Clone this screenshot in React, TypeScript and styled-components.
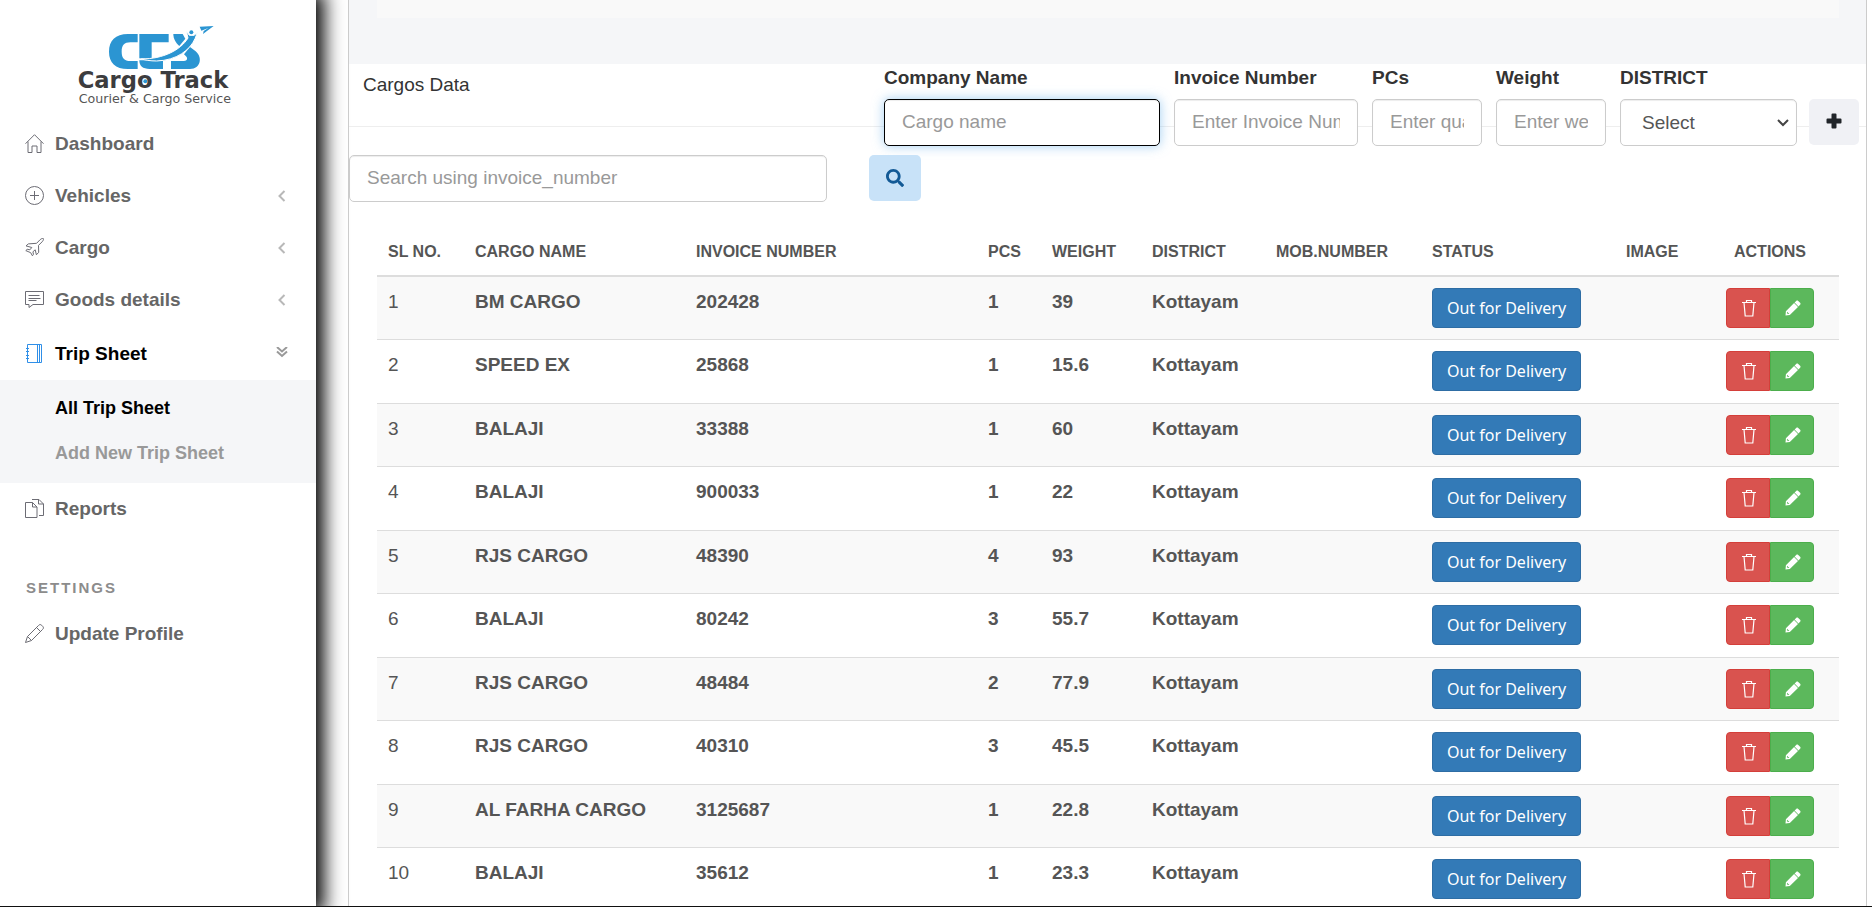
import React from 'react';
import styled, { createGlobalStyle, css } from 'styled-components';
import { FaSearch } from 'react-icons/fa';

const GlobalStyle = createGlobalStyle`
  *, *::before, *::after { box-sizing: border-box; }
  body {
    margin: 0;
    background: #fff;
    color: #333;
    font: 19px/27px "Liberation Sans", Arial, sans-serif;
  }
  button, input, select { font: inherit; }
`;

const Shell = styled.div`
  display: flex;
  height: 100vh;
  overflow: hidden;
  border-bottom: 1px solid #111;
`;

const Sidebar = styled.aside`
  flex: 0 0 316px;
  padding-top: 10px;
  background: #fff;
  box-shadow: 0 0 18px 8px #000;
`;

const LogoLink = styled.a`
  display: block;
  height: 108px;
  padding-left: 60px;
`;

const Menu = styled.ul`
  margin: 0;
  padding: 0;
  list-style: none;
`;

const MenuLink = styled.a<{ $active?: boolean }>`
  display: flex;
  align-items: center;
  gap: 11px;
  height: ${p => (p.$active ? 54 : 52)}px;
  padding: 0 29px ${p => (p.$active ? 0 : 1)}px 25px;
  color: ${p => (p.$active ? '#000' : '#666')};
  font-weight: bold;
  text-decoration: none;

  > span { flex: 1; }
`;

const MenuGlyph = styled.svg<{ $active?: boolean }>`
  flex: none;
  width: 19px;
  height: 19px;
  fill: none;
  stroke: ${p => (p.$active ? '#2f8fe8' : '#6c6c74')};
  stroke-linejoin: round;
`;

const Chevron = styled.svg<{ $open?: boolean }>`
  flex: none;
  width: 12px;
  height: 12px;
  margin-right: -1px;
  fill: none;
  stroke: ${p => (p.$open ? '#999' : '#b8b8b8')};
  stroke-width: 2;
`;

const SubMenu = styled.ul`
  margin: 0;
  padding: 6px 0 7px;
  list-style: none;
  background: #f5f6f8;
`;

const SubLink = styled.a<{ $active?: boolean }>`
  display: block;
  padding-left: 55px;
  color: ${p => (p.$active ? '#000' : '#999')};
  font-size: 18px;
  font-weight: bold;
  line-height: 45px;
  text-decoration: none;
`;

const MenuHeading = styled.h2`
  margin: 38px 0 5px;
  padding-left: 26px;
  color: #8c8c8c;
  font-size: 15px;
  line-height: 30px;
  letter-spacing: 2px;
`;

const Main = styled.main`
  flex: 1;
  min-width: 0;
  margin: 0 5px 0 32px;
  border: solid #ccc;
  border-width: 0 1px;
`;

const TopBand = styled.div`
  height: 64px;
  padding: 0 27px 45px 28px;
  background: #f5f6f8;
`;

const TopBandInner = styled.div`
  height: 18px;
  background: #f9f9f9;
`;

const PanelHeader = styled.header`
  display: flex;
  align-items: flex-start;
  justify-content: space-between;
  height: 63px;
  padding: 0 7px 0 14px;
  border-bottom: 1px solid #eee;
`;

const PanelTitle = styled.h1`
  margin: 7px 0 0;
  font-size: 19px;
  font-weight: normal;
`;

const EntryForm = styled.form`
  display: flex;
  align-items: flex-end;
  gap: 14px;
`;

const Field = styled.div<{ $width: number }>`
  display: flex;
  flex-direction: column;
  gap: 8px;
  width: ${p => p.$width}px;

  label { font-weight: bold; }
`;

const control = css`
  width: 100%;
  height: 47px;
  border: 1px solid #ccc;
  border-radius: 5px;
  background: #fff;
  color: #555;
  box-shadow: inset 0 1px 1px rgba(0, 0, 0, 0.075);
`;

const TextInput = styled.input`
  ${control}
  padding: 0 17px 2px;
  outline: none;

  &::placeholder { color: #999; opacity: 1; }
  &:focus {
    border-color: #000;
    box-shadow: inset 0 1px 1px rgba(0, 0, 0, 0.075), 0 0 12px rgba(102, 175, 233, 0.6);
  }
`;

const SelectBox = styled.div`
  display: grid;
  align-items: center;

  > * { grid-area: 1 / 1; }
  > svg {
    justify-self: end;
    width: 12px;
    height: 8px;
    margin-right: 8px;
    fill: none;
    stroke: #444;
    stroke-width: 2;
    pointer-events: none;
  }
`;

const Select = styled.select`
  ${control}
  appearance: none;
  padding: 0 30px 0 21px;
`;

const IconButton = styled.button<{ $primary?: boolean }>`
  display: flex;
  align-items: center;
  justify-content: center;
  width: ${p => (p.$primary ? 52 : 50)}px;
  height: 46px;
  padding: 0;
  border: 0;
  border-radius: 5px;
  background: ${p => (p.$primary ? '#c8e2f8' : '#f0f1f5')};
  color: ${p => (p.$primary ? '#135a96' : '#212529')};
`;

const AddButton = styled(IconButton)`
  margin: 0 0 1px -2px;
  padding-bottom: 3px;
`;

const SearchForm = styled.form`
  display: flex;
  gap: 42px;
  margin-top: 28px;

  ${TextInput} { width: 478px; }
`;

const TableWrap = styled.div`
  padding: 24px 27px 0 28px;
`;

const Table = styled.table`
  width: 100%;
  border-collapse: separate;
  border-spacing: 0;
  table-layout: fixed;
  color: #555;
  font-weight: bold;
`;

const HeadCell = styled.th<{ $width?: number; $center?: boolean }>`
  width: ${p => (p.$width ? `${p.$width}px` : 'auto')};
  height: 51px;
  padding: 2px 0 0 ${p => (p.$center ? 0 : 11)}px;
  border-bottom: 2px solid #ddd;
  font-size: 16px;
  text-align: ${p => (p.$center ? 'center' : 'left')};
  white-space: nowrap;
`;

const Row = styled.tr`
  height: 63px;

  &:nth-child(odd) { background: #f9f9f9; }
  &:nth-child(even) { height: 64px; }
`;

const Cell = styled.td<{ $plain?: boolean; $center?: boolean }>`
  padding: 11px ${p => (p.$center ? 0 : 11)}px;
  border-bottom: 1px solid #ddd;
  font-weight: ${p => (p.$plain ? 'normal' : 'bold')};
  vertical-align: top;
`;

const StatusButton = styled.button`
  display: block;
  width: 149px;
  height: 40px;
  padding: 0;
  border: 1px solid #2e6da4;
  border-radius: 4px;
  background: #337ab7;
  color: #fff;
  font-family: "Noto Sans", sans-serif;
  font-size: 16px;
  font-weight: normal;
`;

const ActionGroup = styled.div`
  display: flex;
  justify-content: center;
`;

const ActionButton = styled.button<{ $kind: 'delete' | 'edit' }>`
  display: flex;
  align-items: center;
  justify-content: center;
  width: 44px;
  height: 40px;
  padding: 0 0 1px 1px;
  border: 1px solid ${p => (p.$kind === 'delete' ? '#d43f3a' : '#4cae4c')};
  border-radius: ${p => (p.$kind === 'delete' ? '4px 0 0 4px' : '0 4px 4px 0')};
  background: ${p => (p.$kind === 'delete' ? '#d9534f' : '#5cb85c')};
  color: #fff;
`;

const Logo = () => (
  <svg width="200" height="108" viewBox="0 0 600 324" role="img" aria-label="CES Cargo Track">
    <g fill="#2b95d2">
      <path d="M233 72H204C166 72 147 92 147 125s19 52 57 52h29v-24h-22c-18 0-26-9-26-28s8-28 26-28h22z" />
      <path d="M238 72h88v25h-51v49l-37-1zM238 151h37l9 2h25v24h-40c-21 0-31-9-31-26z" />
      <path d="M340 72h28l8 14-18 22c-11-9-18-22-18-36z" />
      <path d="M333 153h39c10 0 12-8 6-14l-6-6 18-22 17 13c21 17 16 53-17 53h-57z" />
      <path d="M244 147C310 147 362 120 384 84L379 64L388 76H402L412 68L405 86C390 120 350 151 290 153C270 153 255 150 244 147z" stroke="#fff" strokeWidth="3" />
      <circle cx="394" cy="67" r="6" />
      <path d="M419 50l42-2-32 24 2-9 14-9-21 8z" />
    </g>
    <text x="53" y="233" fill="#3c3c3e" fontFamily="DejaVu Sans" fontWeight="bold" fontSize="68">Cargo Track</text>
    <circle cx="256" cy="214" r="6" fill="#2b95d2" />
    <text x="56" y="280" fill="#555" fontFamily="DejaVu Sans" fontSize="38">Courier &amp; Cargo Service</text>
  </svg>
);

const glyphs = {
  home: 'M.5 9.700L9.500 .700l9 9M3 7.500v11h4v-6.500h5v6.500h4v-11',
  circlePlus: 'M9.500 .500a9 9 0 1 0 0 18a9 9 0 1 0 0-18zM9.500 5v9M5 9.500h9',
  plane:
    'M11.600 5.300l3.600-3.700c1.400-1.300 3.300-1.500 3.300-.8 0 1-.4 2-1.400 3l-3.600 3.600.2 6.900-2.300 2.500-1.200-5-2.300 2 .6 2.500-1.100 1.500-1.700-3.100L.8 12.600l1.400-1.300 2.700.5 1.900-2.300L1 7.900l2.300-2z',
  comment: 'M.5 1.500h18v13H8l-4 3v-3H.5zM3.500 5.500h11M3.500 8.500h12M3.500 10.500h8',
  notebook: 'M2.500 .500h14v18h-14zM12.500 .500v18M14.500 .500v18M1 4.500h3M1 7.500h3M1 11.500h3M1 14.500h3',
  files: 'M.5 3.500h7l4.500 4.500v10.500H.5zM7.500 3.500V8H12M7 .500h7l4.500 4.500v11.500H14M13.500 .500V5h5',
  pencil: 'M13.500 1.500c1-1.200 2.200-1.200 3.200-.200l1 1c1 1 1 2.200-.2 3.200L6.500 16.500l-6 2 2-6zM11.500 3.500l4 4M2.500 12.500l4 4',
};

const MenuIcon = ({ name, active }: { name: keyof typeof glyphs; active?: boolean }) => (
  <MenuGlyph viewBox="0 0 19 19" $active={active} aria-hidden="true">
    <path d={glyphs[name]} />
  </MenuGlyph>
);

const Collapsed = () => (
  <Chevron viewBox="0 0 12 12"><path d="M8.500 1L3.500 6l5 5" /></Chevron>
);

const Expanded = () => (
  <Chevron viewBox="0 0 12 12" $open><path d="M1 0l5 4.500L11 0M1 4.500L6 9l5-4.500" /></Chevron>
);

const PlusIcon = () => (
  <svg width="16" height="16" viewBox="0 0 16 16" fill="currentColor">
    <path d="M6.500 .500h3a1 1 0 0 1 1 1v4h4a1 1 0 0 1 1 1v3a1 1 0 0 1-1 1h-4v4a1 1 0 0 1-1 1h-3a1 1 0 0 1-1-1v-4h-4a1 1 0 0 1-1-1v-3a1 1 0 0 1 1-1h4v-4a1 1 0 0 1 1-1z" />
  </svg>
);

const TrashIcon = () => (
  <svg width="14" height="18" viewBox="0 0 14 18" fill="none" stroke="currentColor">
    <path d="M0 3.500h14M4.500 3.500v-2h5v2M2 3.500l1.200 13.500h7.600L12 3.500" strokeWidth="1.200" />
  </svg>
);

const PencilIcon = () => (
  <svg width="16" height="16" viewBox="0 0 16 16" fill="currentColor">
    <path d="M11.200 .9c.6-.6 1.400-.6 2 0l1.900 1.900c.6.6.6 1.400 0 2l-1.600 1.600-3.900-3.900zM9.100 3L13 6.900l-8.200 8.200L.5 15.500.900 11.200zM2.100 11.700l-.2 1.400 1 1 1.400-.2z" fillRule="evenodd" />
  </svg>
);

const rows: [string, string, number, number][] = [
  ['BM CARGO', '202428', 1, 39],
  ['SPEED EX', '25868', 1, 15.6],
  ['BALAJI', '33388', 1, 60],
  ['BALAJI', '900033', 1, 22],
  ['RJS CARGO', '48390', 4, 93],
  ['BALAJI', '80242', 3, 55.7],
  ['RJS CARGO', '48484', 2, 77.9],
  ['RJS CARGO', '40310', 3, 45.5],
  ['AL FARHA CARGO', '3125687', 1, 22.8],
  ['BALAJI', '35612', 1, 23.3],
];

export default function App() {
  return (
    <>
      <GlobalStyle />
      <Shell>
        <Sidebar>
          <LogoLink href="#home"><Logo /></LogoLink>
          <nav>
            <Menu>
              <li><MenuLink href="#dashboard"><MenuIcon name="home" /><span>Dashboard</span></MenuLink></li>
              <li><MenuLink href="#vehicles"><MenuIcon name="circlePlus" /><span>Vehicles</span><Collapsed /></MenuLink></li>
              <li><MenuLink href="#cargo"><MenuIcon name="plane" /><span>Cargo</span><Collapsed /></MenuLink></li>
              <li><MenuLink href="#goods"><MenuIcon name="comment" /><span>Goods details</span><Collapsed /></MenuLink></li>
              <li>
                <MenuLink href="#trips" $active><MenuIcon name="notebook" active /><span>Trip Sheet</span><Expanded /></MenuLink>
                <SubMenu>
                  <li><SubLink href="#all-trips" $active>All Trip Sheet</SubLink></li>
                  <li><SubLink href="#new-trip">Add New Trip Sheet</SubLink></li>
                </SubMenu>
              </li>
              <li><MenuLink href="#reports"><MenuIcon name="files" /><span>Reports</span></MenuLink></li>
            </Menu>
            <MenuHeading>SETTINGS</MenuHeading>
            <Menu>
              <li><MenuLink href="#profile"><MenuIcon name="pencil" /><span>Update Profile</span></MenuLink></li>
            </Menu>
          </nav>
        </Sidebar>
        <Main>
          <TopBand><TopBandInner /></TopBand>
          <PanelHeader>
            <PanelTitle>Cargos Data</PanelTitle>
            <EntryForm>
              <Field $width={276}>
                <label htmlFor="company">Company Name</label>
                <TextInput id="company" placeholder="Cargo name" autoFocus />
              </Field>
              <Field $width={184}>
                <label htmlFor="invoice">Invoice Number</label>
                <TextInput id="invoice" placeholder="Enter Invoice Number" />
              </Field>
              <Field $width={110}>
                <label htmlFor="pcs">PCs</label>
                <TextInput id="pcs" placeholder="Enter quantity" />
              </Field>
              <Field $width={110}>
                <label htmlFor="weight">Weight</label>
                <TextInput id="weight" placeholder="Enter weight" />
              </Field>
              <Field $width={177}>
                <label htmlFor="district">DISTRICT</label>
                <SelectBox>
                  <Select id="district"><option>Select</option></Select>
                  <svg viewBox="0 0 12 8" aria-hidden="true"><path d="M1 1l5 5 5-5" /></svg>
                </SelectBox>
              </Field>
              <AddButton type="button" aria-label="Add cargo"><PlusIcon /></AddButton>
            </EntryForm>
          </PanelHeader>
          <SearchForm>
            <TextInput aria-label="Search by invoice number" placeholder="Search using invoice_number" />
            <IconButton type="button" aria-label="Search" $primary><FaSearch size={18} /></IconButton>
          </SearchForm>
          <TableWrap>
            <Table>
              <thead>
                <tr>
                  <HeadCell $width={87}>SL NO.</HeadCell>
                  <HeadCell $width={221}>CARGO NAME</HeadCell>
                  <HeadCell>INVOICE NUMBER</HeadCell>
                  <HeadCell $width={64}>PCS</HeadCell>
                  <HeadCell $width={100}>WEIGHT</HeadCell>
                  <HeadCell $width={124}>DISTRICT</HeadCell>
                  <HeadCell $width={156}>MOB.NUMBER</HeadCell>
                  <HeadCell $width={194}>STATUS</HeadCell>
                  <HeadCell $width={86}>IMAGE</HeadCell>
                  <HeadCell $width={138} $center>ACTIONS</HeadCell>
                </tr>
              </thead>
              <tbody>
                {rows.map(([name, invoice, pcs, weight], i) => (
                  <Row key={invoice}>
                    <Cell $plain>{i + 1}</Cell>
                    <Cell>{name}</Cell>
                    <Cell>{invoice}</Cell>
                    <Cell>{pcs}</Cell>
                    <Cell>{weight}</Cell>
                    <Cell>Kottayam</Cell>
                    <Cell />
                    <Cell><StatusButton type="button">Out for Delivery</StatusButton></Cell>
                    <Cell />
                    <Cell $center>
                      <ActionGroup>
                        <ActionButton type="button" $kind="delete" aria-label="Delete"><TrashIcon /></ActionButton>
                        <ActionButton type="button" $kind="edit" aria-label="Edit"><PencilIcon /></ActionButton>
                      </ActionGroup>
                    </Cell>
                  </Row>
                ))}
              </tbody>
            </Table>
          </TableWrap>
        </Main>
      </Shell>
    </>
  );
}
